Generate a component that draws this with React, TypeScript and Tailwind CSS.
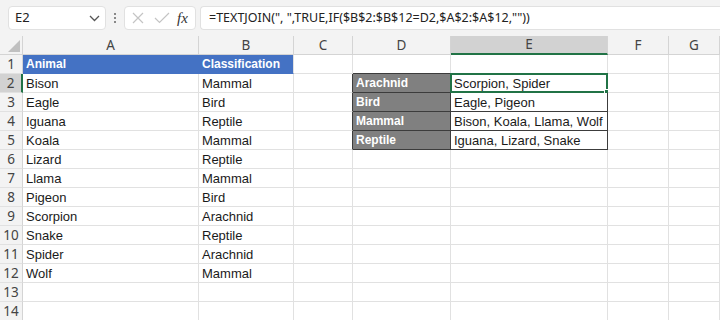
import React from "react";

const COLS = ["A", "B", "C", "D", "E", "F", "G"];
const WIDTHS = [176, 95, 59, 98, 157, 61, 60];

const animals: [string, string][] = [
  ["Bison", "Mammal"],
  ["Eagle", "Bird"],
  ["Iguana", "Reptile"],
  ["Koala", "Mammal"],
  ["Lizard", "Reptile"],
  ["Llama", "Mammal"],
  ["Pigeon", "Bird"],
  ["Scorpion", "Arachnid"],
  ["Snake", "Reptile"],
  ["Spider", "Arachnid"],
  ["Wolf", "Mammal"],
];

const summary: [string, string][] = [
  ["Arachnid", "Scorpion, Spider"],
  ["Bird", "Eagle, Pigeon"],
  ["Mammal", "Bison, Koala, Llama, Wolf"],
  ["Reptile", "Iguana, Lizard, Snake"],
];

const font = { fontFamily: '"Liberation Sans", Arial, sans-serif' };
const uiFont = { fontFamily: '"Noto Sans", sans-serif' };

function cellContent(r: number, c: number): { text: string; kind: string } {
  if (r === 1 && c === 0) return { text: "Animal", kind: "head" };
  if (r === 1 && c === 1) return { text: "Classification", kind: "head" };
  if (r >= 2 && r <= 12 && c <= 1) return { text: animals[r - 2][c], kind: "plain" };
  if (r >= 2 && r <= 5 && c === 3) return { text: summary[r - 2][0], kind: "dark" };
  if (r >= 2 && r <= 5 && c === 4) return { text: summary[r - 2][1], kind: "plain" };
  return { text: "", kind: "plain" };
}

function inBox(r: number, c: number) {
  return r >= 2 && r <= 5 && (c === 3 || c === 4);
}

function Cell({ r, c }: { r: number; c: number }) {
  const { text, kind } = cellContent(r, c);
  const darkRight = inBox(r, c) || (r >= 2 && r <= 5 && c === 2);
  const darkBottom = inBox(r, c) || (r === 1 && (c === 3 || c === 4));
  const bg =
    kind === "head"
      ? "bg-[#4472c4] text-white font-bold text-[12px]"
      : kind === "dark"
      ? "bg-[#808080] text-white font-bold text-[12px]"
      : "bg-white text-[#1a1a1a] text-[13px]";
  const br = darkRight ? "border-r-[#3c3c3c]" : kind === "head" && c === 0 ? "border-r-[#4472c4]" : "border-r-[#e1e1e1]";
  const bb = darkBottom ? "border-b-[#3c3c3c]" : kind === "head" ? "border-b-[#4472c4]" : "border-b-[#e1e1e1]";
  return (
    <div className={`relative h-[19px] border-r border-b ${br} ${bb} ${bg} pl-[3px] leading-[19px] whitespace-nowrap`} style={font}>
      {text}
      {r === 2 && c === 4 && (
        <div className="absolute -left-[1px] -top-[1px] -right-[1px] -bottom-[1px] border-2 border-[#217346] pointer-events-none">
          <div className="absolute -right-[4px] -bottom-[4px] w-[6px] h-[6px] bg-[#217346] border border-white" />
        </div>
      )}
    </div>
  );
}

export default function App() {
  const template = `23px ${WIDTHS.slice(0, 6).map((w) => w + "px").join(" ")} 1fr`;
  const rows = Array.from({ length: 14 }, (_, i) => i + 1);
  return (
    <div className="w-[720px] h-[320px] overflow-hidden bg-white" style={font}>
      {/* formula bar */}
      <div className="h-[36px] bg-[#f3f3f3] flex items-center">
        <div className="ml-[8px] w-[98px] h-[24px] bg-white border border-[#e1e1e1] rounded-[4px] flex items-center justify-between pl-[6px] pr-[5px]">
          <span className="text-[13px] text-[#222]" style={uiFont}>E2</span>
          <svg width="11" height="7" viewBox="0 0 11 7">
            <path d="M1 1 L5.5 5.5 L10 1" fill="none" stroke="#555" strokeWidth="1.3" />
          </svg>
        </div>
        <div className="w-[18px] flex flex-col items-center gap-[2px]">
          <div className="w-[2px] h-[2px] bg-[#888]" />
          <div className="w-[2px] h-[2px] bg-[#888]" />
          <div className="w-[2px] h-[2px] bg-[#888]" />
        </div>
        <div className="w-[72px] h-[24px] bg-white border border-[#e1e1e1] rounded-[4px] flex items-center pl-[7px]">
          <svg width="12" height="12" viewBox="0 0 12 12">
            <path d="M1 1 L11 11 M11 1 L1 11" stroke="#c4c4c4" strokeWidth="1.2" />
          </svg>
          <svg width="16" height="12" viewBox="0 0 16 12" className="ml-[10px]">
            <path d="M1 6 L5.5 10.5 L15 1" fill="none" stroke="#c4c4c4" strokeWidth="1.2" />
          </svg>
          <span className="ml-[7px] text-[15px] italic text-[#333] leading-none" style={{ fontFamily: '"Liberation Serif", serif' }}>
            fx
          </span>
        </div>
        <div className="ml-[4px] flex-1 h-[24px] bg-white border border-[#e1e1e1] rounded-l-[4px] border-r-0 flex items-center pl-[8px]">
          <span className="text-[12.5px] text-[#222] whitespace-nowrap" style={uiFont}>
            =TEXTJOIN(", ",TRUE,IF($B$2:$B$12=D2,$A$2:$A$12,""))
          </span>
        </div>
      </div>
      {/* grid */}
      <div className="grid" style={{ gridTemplateColumns: template }}>
        <div className="h-[19px] bg-[#f3f3f3] border-r border-b border-[#d4d4d4] flex items-end justify-end p-[2px]">
          <svg width="12" height="12" viewBox="0 0 12 12">
            <path d="M12 0 L12 12 L0 12 Z" fill="#c0c0c0" />
          </svg>
        </div>
        {COLS.map((c) => (
          <div
            key={c}
            className={`h-[19px] border-r border-[#d4d4d4] text-[13.5px] text-[#444] flex items-center justify-center ${
              c === "E" ? "bg-[#d2d2d2] border-b-2 border-b-[#217346]" : "bg-[#f3f3f3] border-b border-b-[#d4d4d4]"
            }`}
            style={uiFont}
          >
            {c}
          </div>
        ))}
        {rows.map((r) => (
          <React.Fragment key={r}>
            <div
              className={`h-[19px] border-b border-[#e1e1e1] text-[13.5px] text-[#444] flex items-center justify-center ${
                r === 2 ? "bg-[#d2d2d2] border-r-2 border-r-[#217346]" : "bg-[#f3f3f3] border-r border-r-[#d4d4d4]"
              }`}
              style={uiFont}
            >
              {r}
            </div>
            {COLS.map((_, c) => (
              <Cell key={c} r={r} c={c} />
            ))}
          </React.Fragment>
        ))}
      </div>
    </div>
  );
}
